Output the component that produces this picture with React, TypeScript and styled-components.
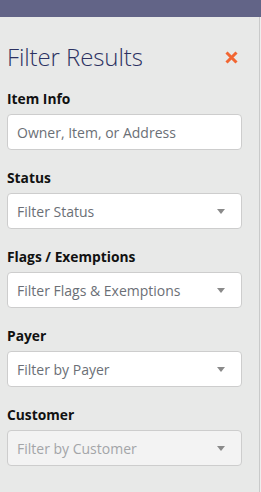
import styled, { createGlobalStyle } from "styled-components";

const GlobalStyle = createGlobalStyle`
  html, body {
    margin: 0;
    padding: 0;
    background: #eeeeee;
  }
  body {
    font-family: "Open Sans", "Liberation Sans", sans-serif;
  }
`;

const Page = styled.div`
  display: flex;
  flex-direction: column;
  height: 492px;
  overflow: hidden;
`;

const TopBar = styled.div`
  height: 17px;
  background-color: #626487;
  flex-shrink: 0;
`;

const Panel = styled.div`
  flex: 1;
  width: 252px;
  background-color: #e8e9e8;
  border-right: 1px solid #c9caca;
  padding: 0 0 0 7px;
`;

const Header = styled.div`
  display: flex;
  align-items: center;
  justify-content: space-between;
  width: 235px;
  padding-top: 24px;
  margin-bottom: 18px;
`;

const Title = styled.div`
  font-family: "Open Sans", sans-serif;
  font-weight: 300;
  font-size: 24px;
  line-height: 32px;
  color: #2c3162;
  letter-spacing: -0.1px;
`;

const CloseButton = styled.button`
  border: none;
  background: none;
  padding: 0;
  margin-right: 4px;
  width: 14px;
  height: 14px;
  display: flex;
  align-items: center;
  justify-content: center;
  cursor: pointer;
`;

const Section = styled.div`
  display: flex;
  flex-direction: column;
  gap: 7px;
  margin-bottom: 20px;
`;

const Label = styled.label`
  font-size: 13.8px;
  font-weight: 700;
  line-height: 16px;
  color: #111;
`;

const Field = styled.div<{ $disabled?: boolean }>`
  box-sizing: border-box;
  width: 235px;
  height: 36px;
  display: flex;
  align-items: center;
  justify-content: space-between;
  padding: 0 16px 0 9px;
  background-color: ${(p) => (p.$disabled ? "#f3f3f3" : "#ffffff")};
  border: 1px solid #cdcdcd;
  border-radius: 4px;
  font-size: 14px;
  color: ${(p) => (p.$disabled ? "#a3a5a8" : "#6b6f76")};
`;

const Caret = styled.span`
  width: 0;
  height: 0;
  border-left: 4.5px solid transparent;
  border-right: 4.5px solid transparent;
  border-top: 5px solid #8a8a8a;
`;

const sections = [
  { label: "Item Info", placeholder: "Owner, Item, or Address", select: false },
  { label: "Status", placeholder: "Filter Status", select: true },
  { label: "Flags / Exemptions", placeholder: "Filter Flags & Exemptions", select: true },
  { label: "Payer", placeholder: "Filter by Payer", select: true },
  { label: "Customer", placeholder: "Filter by Customer", select: true, disabled: true },
];

export default function App() {
  return (
    <Page>
      <GlobalStyle />
      <TopBar />
      <Panel>
        <Header>
          <Title>Filter Results</Title>
          <CloseButton aria-label="Close">
            <svg width="13" height="13" viewBox="0 0 13 13">
              <path d="M1.5 1.5 L11.5 11.5 M11.5 1.5 L1.5 11.5" stroke="#f26632" strokeWidth="3" />
            </svg>
          </CloseButton>
        </Header>
        {sections.map((s) => (
          <Section key={s.label}>
            <Label>{s.label}</Label>
            <Field $disabled={s.disabled}>
              <span>{s.placeholder}</span>
              {s.select && <Caret />}
            </Field>
          </Section>
        ))}
      </Panel>
    </Page>
  );
}
